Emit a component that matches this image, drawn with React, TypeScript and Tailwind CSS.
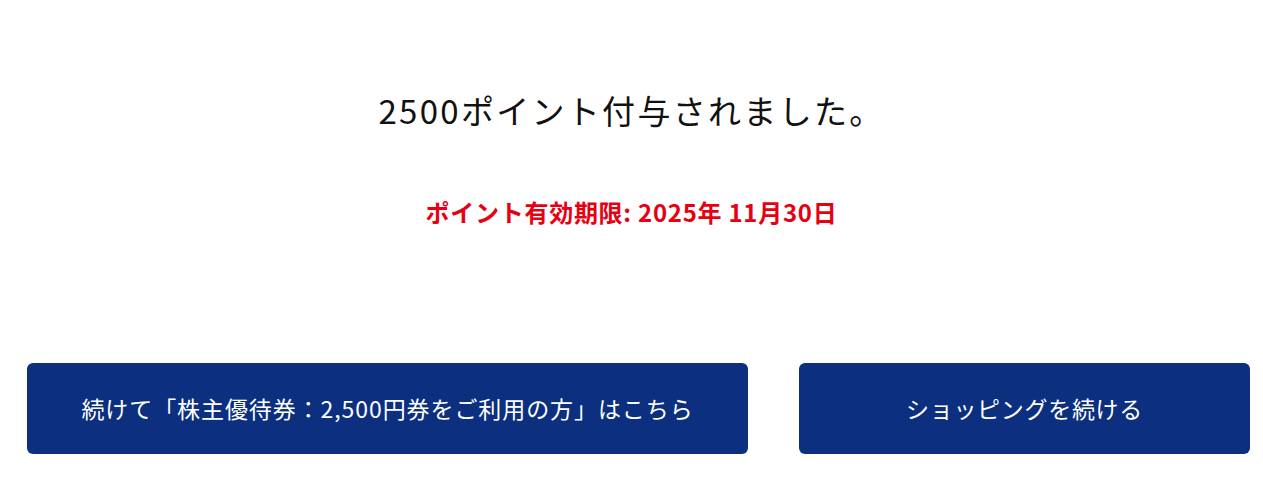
export default function App() {
  return (
    <div
      className="min-h-[481px] w-full bg-white"
      style={{ fontFamily: '"Noto Sans CJK JP", "Noto Sans", sans-serif' }}
    >
      <div className="flex flex-col items-center pt-[86px]">
        <h1 className="text-[33px] font-normal leading-[48px] tracking-[0.07em] text-[#111]">
          2500ポイント付与されました。
        </h1>
        <p className="mt-[61px] text-[24px] font-bold leading-[34px] tracking-[0.03em] text-[#e60012]">
          ポイント有効期限: 2025年 11月30日
        </p>
      </div>

      <div className="mt-[134px] flex gap-[51px] pl-[27px] pr-[13px]">
        <button className="flex h-[91px] w-[721px] items-center justify-center rounded-[6px] bg-[#0c2f7f] text-[23px] tracking-[0.04em] text-white">
          続けて「株主優待券：2,500円券をご利用の方」はこちら
        </button>
        <button className="flex h-[91px] w-[451px] items-center justify-center rounded-[6px] bg-[#0c2f7f] text-[23px] tracking-[0.03em] text-white">
          ショッピングを続ける
        </button>
      </div>
    </div>
  )
}
